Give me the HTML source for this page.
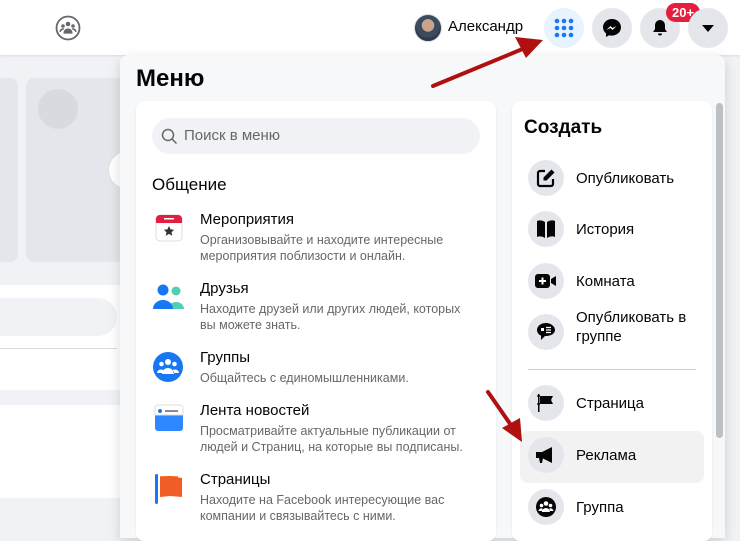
<!DOCTYPE html>
<html><head><meta charset="utf-8"><style>
*{margin:0;padding:0;box-sizing:border-box}
body{width:740px;height:538px;overflow:hidden;background:#f0f2f5;font-family:"Liberation Sans","Noto Sans CJK SC",sans-serif;position:relative;color:#050505}
.abs{position:absolute}
.top{left:0;top:0;width:740px;height:55px;background:#fff;box-shadow:0 1px 2px rgba(0,0,0,.1)}
.rb{width:40px;height:40px;border-radius:50%;background:#e4e6eb;top:8px;display:flex;align-items:center;justify-content:center}
.menu{left:120px;top:55px;width:605px;height:483px;background:#f7f8fa;box-shadow:0 4px 12px rgba(0,0,0,.15);border-radius:8px 8px 0 0}
.card{background:#fff;border-radius:8px;box-shadow:0 1px 2px rgba(0,0,0,.08)}
.it{position:absolute;left:16px}
.it .t{position:absolute;left:48px;top:0;font-size:15px;color:#050505;white-space:nowrap}
.it .d{position:absolute;left:48px;top:21px;font-size:12.5px;color:#65676b;line-height:16px;white-space:nowrap}
.ci{width:36px;height:36px;border-radius:50%;background:#e4e6eb;display:flex;align-items:center;justify-content:center}
.ri{position:absolute;left:16px;display:flex;align-items:center}
.ri span{margin-left:12px;font-size:15px;line-height:19px}
</style></head><body>
<div class="abs top"></div>
<!-- group icon top-left -->
<svg class="abs" style="left:55px;top:15px" width="26" height="26" viewBox="0 0 26 26"><circle cx="13" cy="13" r="11.5" fill="none" stroke="#65676b" stroke-width="1.8"/><circle cx="13" cy="9" r="2.3" fill="#65676b"/><circle cx="8" cy="11" r="1.8" fill="#65676b"/><circle cx="18" cy="11" r="1.8" fill="#65676b"/><path d="M9 18a4 4 0 0 1 8 0z M5 17a3 3 0 0 1 4-3 M21 17a3 3 0 0 0-4-3" fill="#65676b" stroke="#65676b" stroke-width="1.2"/></svg>
<!-- profile -->
<div class="abs" style="left:414px;top:14px;width:28px;height:28px;border-radius:50%;background:radial-gradient(circle at 50% 40%,#c9a48c 0 30%,#3b4a5c 32% 60%,#2c3a4a 62%);border:1px solid #ddd"></div>
<div class="abs" style="left:448px;top:18px;font-size:15px;font-weight:500">Александр</div>
<div class="abs rb" style="left:544px;background:#e7f3ff">
<svg width="20" height="20" viewBox="0 0 20 20" fill="#1877f2"><circle cx="3" cy="3" r="2.3"/><circle cx="10" cy="3" r="2.3"/><circle cx="17" cy="3" r="2.3"/><circle cx="3" cy="10" r="2.3"/><circle cx="10" cy="10" r="2.3"/><circle cx="17" cy="10" r="2.3"/><circle cx="3" cy="17" r="2.3"/><circle cx="10" cy="17" r="2.3"/><circle cx="17" cy="17" r="2.3"/></svg></div>
<div class="abs rb" style="left:592px"><svg width="20" height="20" viewBox="0 0 20 20"><path d="M10 1C5 1 1 4.6 1 9.2c0 2.5 1.1 4.6 3 6.1V19l3.2-1.8c.9.3 1.8.4 2.8.4 5 0 9-3.6 9-8.3S15 1 10 1z" fill="#050505"/><path d="M4.5 12l4-4 2 2 4-2-4 4-2-2z" fill="#fff"/></svg></div>
<div class="abs rb" style="left:640px"><svg width="18" height="18" viewBox="0 0 18 18"><path d="M9 1a5 5 0 0 0-5 5v4l-2 3h14l-2-3V6a5 5 0 0 0-5-5z M7 14.5a2 2 0 0 0 4 0z" fill="#050505"/></svg></div>
<div class="abs" style="left:666px;top:3px;height:19px;padding:0 6px;border-radius:10px;background:#e41e3f;color:#fff;font-size:13px;font-weight:bold;line-height:19px">20+</div>
<div class="abs rb" style="left:688px"><svg width="14" height="10" viewBox="0 0 14 10"><path d="M1 2h12l-6 7z" fill="#050505"/></svg></div>
<!-- left background -->
<div class="abs" style="left:0;top:78px;width:18px;height:184px;background:#e4e6eb;border-radius:0 8px 8px 0"></div>
<div class="abs" style="left:26px;top:78px;width:100px;height:184px;background:#e4e6eb;border-radius:8px"></div>
<div class="abs" style="left:38px;top:89px;width:40px;height:40px;background:#d8dadf;border-radius:50%"></div>
<div class="abs" style="left:108px;top:150px;width:40px;height:40px;background:#fff;border-radius:50%;border:1px solid #ddd"></div>
<div class="abs" style="left:0;top:285px;width:125px;height:105px;background:#fff"></div>
<div class="abs" style="left:0;top:298px;width:117px;height:38px;background:#f0f2f5;border-radius:0 19px 19px 0"></div>
<div class="abs" style="left:0;top:348px;width:117px;height:1px;background:#dadde1"></div>
<div class="abs" style="left:0;top:405px;width:125px;height:93px;background:#fff"></div>
<!-- menu -->
<div class="abs menu">
<div class="abs" style="left:16px;top:10px;font-size:24px;font-weight:bold">Меню</div>
<div class="abs card" style="left:16px;top:46px;width:360px;height:440px">
<div class="abs" style="left:16px;top:17px;width:328px;height:36px;background:#f0f2f5;border-radius:18px">
<svg class="abs" style="left:9px;top:10px" width="17" height="17" viewBox="0 0 17 17"><circle cx="7" cy="7" r="5.5" fill="none" stroke="#65676b" stroke-width="1.5"/><path d="M11 11l4.5 4.5" stroke="#65676b" stroke-width="1.5"/></svg>
<div class="abs" style="left:32px;top:9px;font-size:15px;color:#65676b">Поиск в меню</div></div>
<div class="abs" style="left:16px;top:74px;font-size:17px;font-weight:500">Общение</div>
<div class="it" style="top:110px">
<svg class="abs" style="left:3px;top:3px" width="30" height="30" viewBox="0 0 30 30"><rect x="1" y="1" width="26" height="26" rx="4" fill="#fff" stroke="#ddd"/><path d="M1 5a4 4 0 0 1 4-4h18a4 4 0 0 1 4 4v4H1z" fill="#e41e3f"/><rect x="9" y="4" width="10" height="1.5" fill="#fff"/><path d="M14 12l1.6 3.4 3.6.4-2.7 2.4.8 3.6-3.3-1.9-3.3 1.9.8-3.6-2.7-2.4 3.6-.4z" fill="#333"/></svg>
<div class="t">Мероприятия</div><div class="d">Организовывайте и находите интересные<br>мероприятия поблизости и онлайн.</div></div>
<div class="it" style="top:179px">
<svg class="abs" style="left:0;top:2px" width="34" height="30" viewBox="0 0 34 30"><circle cx="24" cy="9" r="4.5" fill="#4fcfb3"/><path d="M16 27a8 7 0 0 1 16 0z" fill="#4fcfb3"/><circle cx="11" cy="8" r="5.5" fill="#1877f2"/><path d="M1 27a10 9 0 0 1 20 0z" fill="#1877f2"/></svg>
<div class="t">Друзья</div><div class="d">Находите друзей или других людей, которых<br>вы можете знать.</div></div>
<div class="it" style="top:248px">
<svg class="abs" style="left:0;top:2px" width="32" height="32" viewBox="0 0 32 32"><circle cx="16" cy="16" r="15" fill="#1877f2"/><circle cx="16" cy="11" r="3" fill="#fff"/><circle cx="9.5" cy="13" r="2.3" fill="#fff"/><circle cx="22.5" cy="13" r="2.3" fill="#fff"/><path d="M10 23a6 6 0 0 1 12 0z M5 22a4 4 0 0 1 6-3v3z M27 22a4 4 0 0 0-6-3v3z" fill="#fff"/></svg>
<div class="t">Группы</div><div class="d">Общайтесь с единомышленниками.</div></div>
<div class="it" style="top:301px">
<svg class="abs" style="left:2px;top:2px" width="30" height="30" viewBox="0 0 30 30"><rect x="1" y="1" width="28" height="26" rx="3" fill="#2d88ff"/><path d="M1 4a3 3 0 0 1 3-3h22a3 3 0 0 1 3 3v7H1z" fill="#fff" stroke="#ddd"/><circle cx="6" cy="7" r="2" fill="#1877f2"/><rect x="11" y="6.3" width="13" height="1.5" fill="#65676b"/></svg>
<div class="t">Лента новостей</div><div class="d">Просматривайте актуальные публикации от<br>людей и Страниц, на которые вы подписаны.</div></div>
<div class="it" style="top:370px">
<svg class="abs" style="left:2px;top:2px" width="30" height="34" viewBox="0 0 30 34"><rect x="1" y="1" width="3" height="30" rx="1.5" fill="#1877f2"/><path d="M6 3h18v20H6z" fill="#f7923b"/><path d="M6 4l10-1 12 2v19l-12-1-10 1z" fill="#f25c26"/></svg>
<div class="t">Страницы</div><div class="d">Находите на Facebook интересующие вас<br>компании и связывайтесь с ними.</div></div>
</div>
<div class="abs card" style="left:392px;top:46px;width:200px;height:440px">
<div class="abs" style="left:12px;top:16px;font-size:19px;font-weight:bold">Создать</div>
<div class="ri" style="top:59px"><div class="ci"><svg width="20" height="20" viewBox="0 0 20 20"><path d="M9 3H4a2 2 0 0 0-2 2v11a2 2 0 0 0 2 2h11a2 2 0 0 0 2-2v-5" fill="none" stroke="#050505" stroke-width="2.2"/><path d="M15.5 1.5l3 3-8 8H7.5v-3z" fill="#050505"/></svg></div><span>Опубликовать</span></div>
<div class="ri" style="top:110px"><div class="ci"><svg width="20" height="18" viewBox="0 0 20 18"><path d="M9 2C6 0 3 0 1 1v16c2-1 5-1 8 1z M11 2c3-2 6-2 8-1v16c-2-1-5-1-8 1z" fill="#050505"/></svg></div><span>История</span></div>
<div class="ri" style="top:162px"><div class="ci"><svg width="22" height="16" viewBox="0 0 22 16"><rect x="0" y="1" width="15" height="14" rx="3" fill="#050505"/><path d="M16 6l5-3v10l-5-3z" fill="#050505"/><path d="M7.5 4.5v7M4 8h7" stroke="#fff" stroke-width="2"/></svg></div><span>Комната</span></div>
<div class="ri" style="top:207px;align-items:flex-start"><div class="ci" style="margin-top:6px"><svg width="20" height="20" viewBox="0 0 20 20"><path d="M10 1C5 1 1 4 1 8c0 2.5 1.5 4.5 4 5.6V18l4-4h1c5 0 9-2.5 9-6s-4-7-9-7z" fill="#050505"/><rect x="5" y="6" width="3" height="3" fill="#fff"/><path d="M10 5.5h5M10 8h5M10 10.5h5" stroke="#fff" stroke-width="1.3"/></svg></div><span style="margin-top:0">Опубликовать в<br>группе</span></div>
<div class="abs" style="left:16px;top:268px;width:168px;height:1px;background:#ced0d4"></div>
<div class="ri" style="top:284px"><div class="ci"><svg width="20" height="20" viewBox="0 0 20 20"><rect x="2" y="1" width="1.5" height="18" fill="#050505"/><path d="M4 3h13l-2 4 2 4H4z" fill="#050505"/><path d="M1 3h3M1 11h3" stroke="#050505" stroke-width="1.2"/></svg></div><span>Страница</span></div>
<div class="abs" style="left:8px;top:330px;width:184px;height:52px;background:#f2f2f2;border-radius:8px"></div>
<div class="ri" style="top:336px"><div class="ci"><svg width="22" height="18" viewBox="0 0 22 18"><path d="M1 6h6l10-5v16L7 12H1z" fill="#050505"/><path d="M4 12h4l-1 5H5z" fill="#050505"/></svg></div><span>Реклама</span></div>
<div class="ri" style="top:388px"><div class="ci"><svg width="22" height="22" viewBox="0 0 22 22"><circle cx="11" cy="11" r="10" fill="#050505"/><circle cx="11" cy="7.5" r="2.3" fill="#fff"/><circle cx="6.5" cy="9.5" r="1.8" fill="#fff"/><circle cx="15.5" cy="9.5" r="1.8" fill="#fff"/><path d="M7 16a4 4 0 0 1 8 0z M3.5 15a3 3 0 0 1 4-2.5v2.5z M18.5 15a3 3 0 0 0-4-2.5v2.5z" fill="#fff"/></svg></div><span>Группа</span></div>
</div>
<div class="abs" style="left:596px;top:48px;width:7px;height:335px;background:#bcc0c4;border-radius:4px"></div>
</div>
<!-- arrows -->
<svg class="abs" style="left:0;top:0" width="740" height="538" viewBox="0 0 740 538"><path d="M433 86L525 48" stroke="#b01010" stroke-width="4" stroke-linecap="round"/><path d="M543 40L515 37L526 58z" fill="#b01010"/><path d="M488 392L513 428" stroke="#b01010" stroke-width="4" stroke-linecap="round"/><path d="M522 442L502 428L520 418z" fill="#b01010"/></svg>
</body></html>
